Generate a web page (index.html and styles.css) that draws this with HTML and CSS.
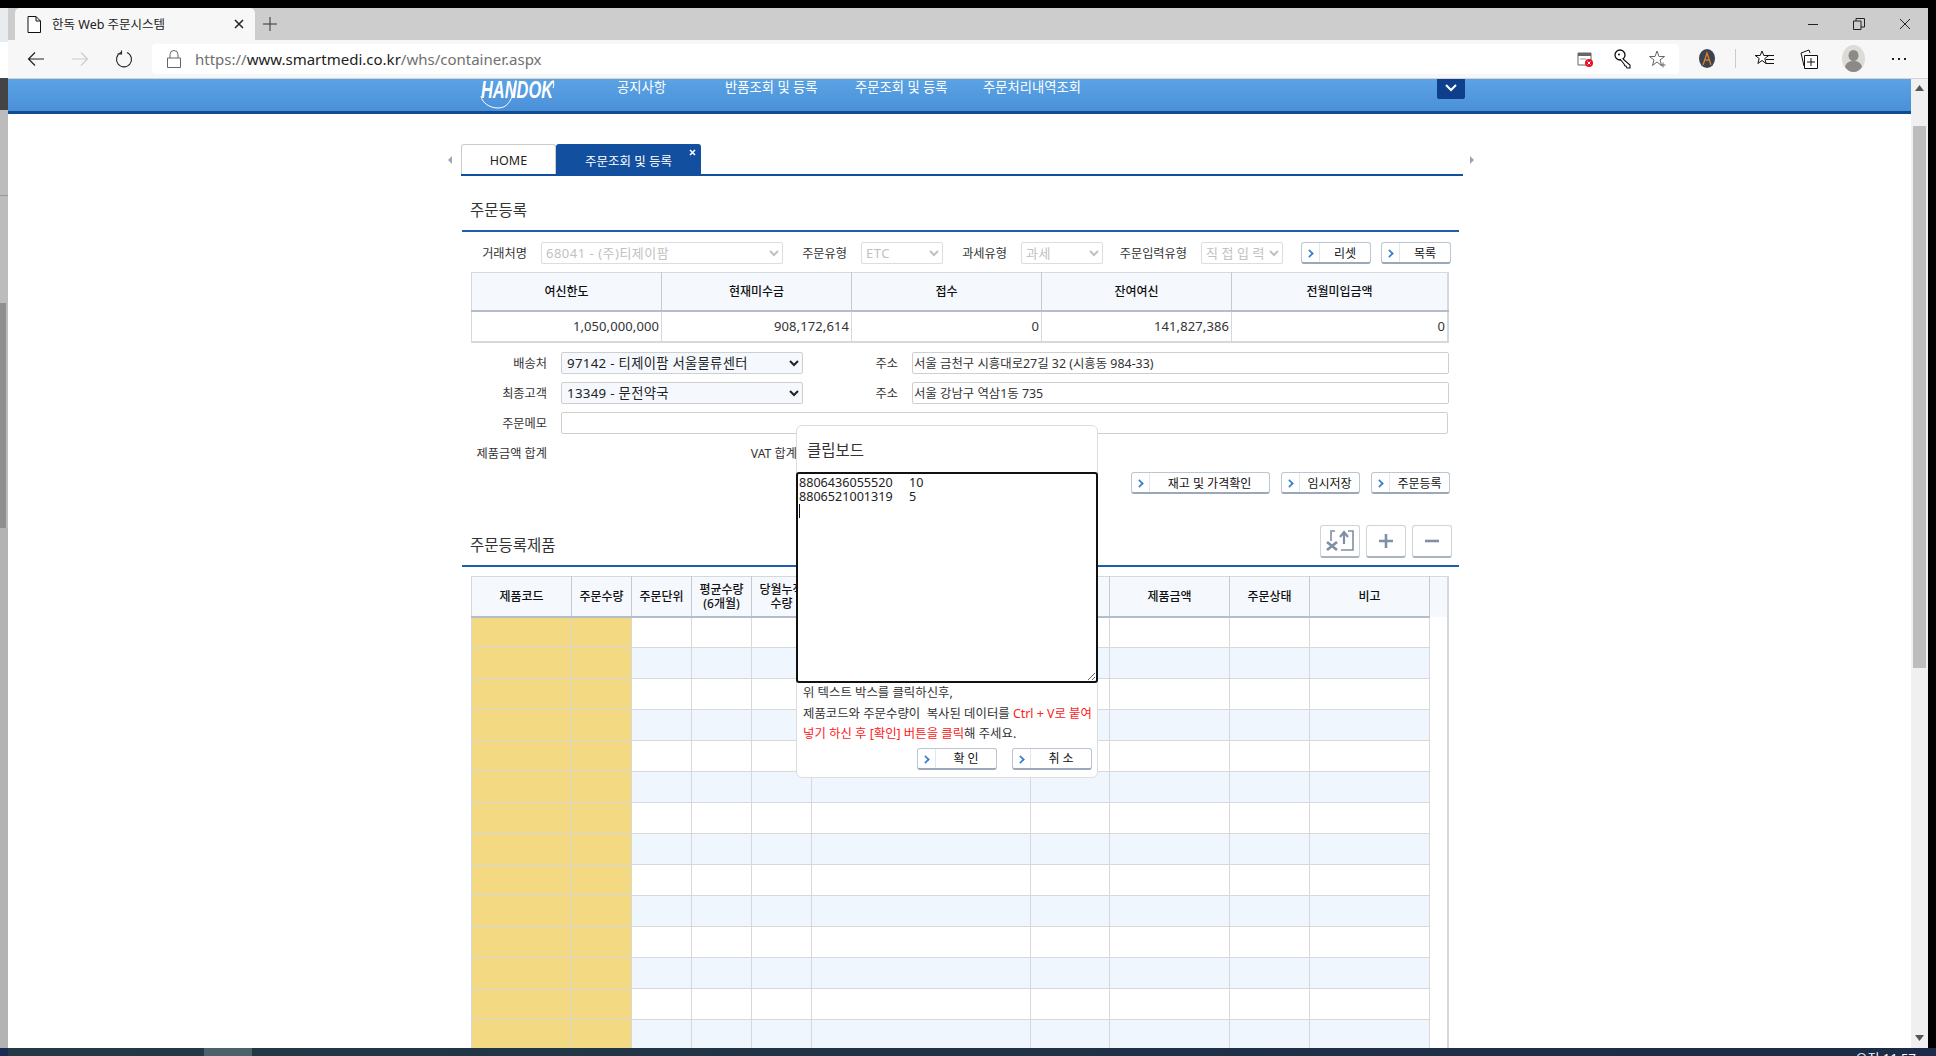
FILE: index.html
```html
<!DOCTYPE html>
<html lang="ko">

<head>
  <meta charset="UTF-8">
  <title>한독 Web 주문시스템</title>
  <link rel="stylesheet" href="styles.css">
</head>

<body>
  <div class="top-edge"></div>

  <div class="desktop">
    <div class="back-window">
      <div class="back-light"></div>
      <div class="back-white"></div>
      <div class="back-dark"></div>
      <div class="back-gray">
        <div class="back-thumb"></div>
      </div>
    </div>

    <div class="browser">
      <div class="tabstrip">
        <div class="browser-tab">
          <svg class="tab-doc" width="14" height="17" viewBox="0 0 14 17">
            <path d="M1 .5h8l4.500 4.500v11.500h-12.500zM9 .5v4.500h4.500" fill="#fff" stroke="#111" />
          </svg>
          <span class="tab-title">한독 Web 주문시스템</span>
          <svg class="tab-close" width="10" height="10" viewBox="0 0 10 10">
            <path d="M1 1l8 8M9 1l-8 8" stroke="#222" stroke-width="1.500" />
          </svg>
        </div>
        <svg class="tab-new" width="14" height="14" viewBox="0 0 14 14">
          <path d="M7 0v14M0 7h14" stroke="#333" />
        </svg>
        <div class="win-controls">
          <svg width="12" height="12" viewBox="0 0 12 12"><path d="M1 6.500h10" stroke="#222" /></svg>
          <svg width="12" height="12" viewBox="0 0 12 12"><path d="M.5 3h7.500v8.500h-7.500zM3 3v-2.500h8.500v8.500h-3.500" fill="none" stroke="#222" /></svg>
          <svg width="12" height="12" viewBox="0 0 12 12"><path d="M1 1l10 10M11 1l-10 10" stroke="#222" /></svg>
        </div>
      </div>

      <div class="toolbar">
        <svg class="nav-back" width="18" height="16" viewBox="0 0 18 16"><path d="M17 8h-15M8 1.500l-6.500 6.500 6.500 6.500" fill="none" stroke="#222" stroke-width="1.200" /></svg>
        <svg class="nav-forward" width="18" height="16" viewBox="0 0 18 16"><path d="M1 8h15M10 1.500l6.500 6.500-6.500 6.500" fill="none" stroke="#ccc" stroke-width="1.200" /></svg>
        <svg class="nav-reload" width="18" height="18" viewBox="0 0 18 18"><path d="M12 2.500a7.500 7.500 0 1 1-6 0M6.500 .5v3.500h-4" fill="none" stroke="#222" stroke-width="1.100" /></svg>
        <div class="address">
          <svg class="lock" width="14" height="18" viewBox="0 0 14 18"><path d="M.5 8h13v9.500h-13zM3 8v-3.500a4 4 0 0 1 8 0v3.500" fill="none" stroke="#666" /></svg>
          <span class="url">https://<b>www.smartmedi.co.kr</b>/whs/container.aspx</span>
          <svg class="addr-popup" width="16" height="16" viewBox="0 0 16 16">
            <path d="M1 2h13v12h-13z" fill="#fff" stroke="#666" />
            <path d="M1 2h13v3h-13z" fill="#666" />
            <path d="M3 8h6" stroke="#999" />
            <circle cx="12" cy="12" r="4" fill="#e81123" />
            <path d="M10.500 10.500l3 3M13.500 10.500l-3 3" stroke="#fff" />
          </svg>
          <svg class="addr-key" width="18" height="20" viewBox="0 0 18 20">
            <circle cx="6" cy="6" r="5" fill="#fff" stroke="#111" stroke-width="1.300" />
            <circle cx="5" cy="5.500" r="1" fill="#111" />
            <path d="M9 10l7 6v3h-3l-1-2-1 0-1-2-4-5" fill="#fff" stroke="#111" stroke-width="1.100" />
          </svg>
          <svg class="addr-star" width="18" height="18" viewBox="0 0 18 18">
            <path d="M8 1l2 5.500h5.500l-4.500 3.500 1.500 5.500-4.500-3.500-4.500 3.500 1.500-5.500-4.500-3.500h5.500z" fill="none" stroke="#666" />
            <path d="M14 12.500v5M11.500 15h5" stroke="#666" />
          </svg>
        </div>
        <div class="ext-avatar">
          <svg width="16" height="19" viewBox="0 0 16 19">
            <ellipse cx="8" cy="9.500" rx="8" ry="9.500" fill="#3d4250" />
            <path d="M4 16l4-12 4 12M6 11h4" fill="none" stroke="#d9812a" stroke-width="1.300" />
          </svg>
        </div>
        <div class="tool-sep"></div>
        <svg class="tool-fav" width="20" height="18" viewBox="0 0 20 18">
          <path d="M7 1l1.800 4.500h5l-4 3 1.300 5-4.100-3-4.100 3 1.300-5-4-3h5z" fill="#fff" stroke="#111" />
          <path d="M11 5.500h8M11 9.500h8M11 13.500h8" stroke="#111" />
        </svg>
        <svg class="tool-coll" width="18" height="20" viewBox="0 0 18 20">
          <path d="M1 4l8-3 1 3" fill="#fff" stroke="#111" />
          <path d="M1 4l3 13" stroke="#111" />
          <path d="M4.500 6.500h13v13h-13z" fill="#fff" stroke="#111" />
          <path d="M11 9v8M7 13h8" stroke="#111" />
        </svg>
        <svg class="tool-profile" width="23" height="27" viewBox="0 0 23 27">
          <ellipse cx="11.500" cy="13.500" rx="11.500" ry="13.500" fill="#dcdbd8" />
          <ellipse cx="11.500" cy="10.500" rx="5" ry="5.500" fill="#8c8a86" />
          <path d="M3 22c1-5 5-6 8.500-6s7.500 1 8.500 6c-2 3-5 5-8.500 5s-6.500-2-8.500-5z" fill="#8c8a86" />
        </svg>
        <svg class="tool-more" width="16" height="4" viewBox="0 0 16 4">
          <path d="M1 1h2v2h-2zM7 1h2v2h-2zM13 1h2v2h-2z" fill="#222" />
        </svg>
      </div>

      <div class="viewport">
        <div class="page">
          <div class="gnb">
            <div class="logo">
              <svg width="76" height="31" viewBox="0 0 76 31">
                <text x="1" y="18.500" class="logo-text" textLength="72" lengthAdjust="spacingAndGlyphs">HANDOK</text>
                <path d="M1 17c1 7 9 12 17 12 9 0 13-7 15-15l3-13M73 1c1 3 1 5 0 8" fill="none" stroke="#fff" />
              </svg>
            </div>
            <a class="gnb-item gnb-notice">공지사항</a>
            <a class="gnb-item gnb-return">반품조회 및 등록</a>
            <a class="gnb-item gnb-order">주문조회 및 등록</a>
            <a class="gnb-item gnb-history">주문처리내역조회</a>
            <div class="gnb-toggle">
              <svg width="12" height="8" viewBox="0 0 12 8"><path d="M1 1l5 5 5-5" fill="none" stroke="#fff" stroke-width="2" /></svg>
            </div>
          </div>

          <div class="tab-row">
            <span class="tab-arrow left"></span>
            <div class="tab-track">
              <div class="page-tab">HOME</div>
              <div class="page-tab on">주문조회 및 등록
                <svg class="page-tab-x" width="7" height="7" viewBox="0 0 7 7"><path d="M1 1l5 5M6 1l-5 5" stroke="#fff" stroke-width="1.600" /></svg>
              </div>
            </div>
            <span class="tab-arrow right"></span>
          </div>

          <div class="section">
            <div class="sec-head">
              <h2 class="sec-title">주문등록</h2>
            </div>

            <div class="form-row first">
              <label class="lbl w65">거래처명</label>
              <select class="sel w242" disabled><option>68041 - (주)티제이팜</option></select>
              <label class="lbl w64">주문유형</label>
              <select class="sel w82" disabled><option>ETC</option></select>
              <label class="lbl w64">과세유형</label>
              <select class="sel w82" disabled><option>과세</option></select>
              <label class="lbl w84">주문입력유형</label>
              <select class="sel wide w82" disabled><option>직접입력</option></select>
              <button class="btn w70 push-18"><i class="btn-ico"></i><span>리셋</span></button>
              <button class="btn w70 push-10"><i class="btn-ico"></i><span>목록</span></button>
            </div>

            <table class="summary">
              <colgroup>
                <col class="c190"><col class="c190"><col class="c190"><col class="c190"><col>
              </colgroup>
              <tr>
                <th>여신한도</th>
                <th>현재미수금</th>
                <th>접수</th>
                <th>잔여여신</th>
                <th>전월미입금액</th>
              </tr>
              <tr>
                <td>1,050,000,000</td>
                <td>908,172,614</td>
                <td>0</td>
                <td>141,827,386</td>
                <td>0</td>
              </tr>
            </table>

            <div class="form-row">
              <label class="lbl w85">배송처</label>
              <select class="sel active w242"><option>97142 - 티제이팜 서울물류센터</option></select>
              <label class="lbl w95">주소</label>
              <input class="txt w537" type="text" value="서울 금천구 시흥대로27길 32 (시흥동 984-33)">
            </div>
            <div class="form-row">
              <label class="lbl w85">최종고객</label>
              <select class="sel active w242"><option>13349 - 문전약국</option></select>
              <label class="lbl w95">주소</label>
              <input class="txt w537" type="text" value="서울 강남구 역삼1동 735">
            </div>
            <div class="form-row">
              <label class="lbl w85">주문메모</label>
              <input class="txt w887" type="text">
            </div>
            <div class="form-row">
              <label class="lbl w85">제품금액 합계</label>
              <label class="lbl w236 flat">VAT 합계</label>
            </div>
            <div class="form-row actions">
              <button class="btn w139"><i class="btn-ico"></i><span>재고 및 가격확인</span></button>
              <button class="btn w79"><i class="btn-ico"></i><span>임시저장</span></button>
              <button class="btn w79"><i class="btn-ico"></i><span>주문등록</span></button>
            </div>
          </div>

          <div class="section second">
            <div class="sec-head">
              <h2 class="sec-title">주문등록제품</h2>
              <div class="sec-tools">
                <button class="tool-btn">
                  <svg width="38" height="30" viewBox="0 0 38 30">
                    <path d="M10 15v-10h4M27 5h5v19h-12" fill="none" stroke="#7f8fa6" stroke-width="1.600" />
                    <path d="M23 18v-11M19 11l4-5 4 5" fill="none" stroke="#7f8fa6" stroke-width="2.200" />
                    <path d="M6 16l10 8M16 16l-10 8" stroke="#7f8fa6" stroke-width="2.800" />
                  </svg>
                </button>
                <button class="tool-btn">
                  <svg width="14" height="14" viewBox="0 0 14 14"><path d="M7 0v14M0 7h14" stroke="#7f8fa6" stroke-width="2.600" /></svg>
                </button>
                <button class="tool-btn">
                  <svg width="14" height="14" viewBox="0 0 14 14"><path d="M0 7h14" stroke="#7f8fa6" stroke-width="2.600" /></svg>
                </button>
              </div>
            </div>

            <table class="items">
              <colgroup>
                <col class="i100"><col class="i60"><col class="i60"><col class="i60"><col class="i60">
                <col class="i219"><col class="i79"><col class="i120"><col class="i80"><col class="i120"><col>
              </colgroup>
              <thead>
                <tr>
                  <th>제품코드</th>
                  <th>주문수량</th>
                  <th>주문단위</th>
                  <th>평균수량<br>(6개월)</th>
                  <th>당월누적<br>수량</th>
                  <th>제품명</th>
                  <th>단가</th>
                  <th>제품금액</th>
                  <th>주문상태</th>
                  <th>비고</th>
                  <th class="gutter"></th>
                </tr>
              </thead>
              <tbody>
                <tr><td class="key"></td><td class="key"></td><td></td><td></td><td></td><td></td><td></td><td></td><td></td><td></td><td class="gutter"></td></tr>
                <tr><td class="key"></td><td class="key"></td><td></td><td></td><td></td><td></td><td></td><td></td><td></td><td></td><td class="gutter"></td></tr>
                <tr><td class="key"></td><td class="key"></td><td></td><td></td><td></td><td></td><td></td><td></td><td></td><td></td><td class="gutter"></td></tr>
                <tr><td class="key"></td><td class="key"></td><td></td><td></td><td></td><td></td><td></td><td></td><td></td><td></td><td class="gutter"></td></tr>
                <tr><td class="key"></td><td class="key"></td><td></td><td></td><td></td><td></td><td></td><td></td><td></td><td></td><td class="gutter"></td></tr>
                <tr><td class="key"></td><td class="key"></td><td></td><td></td><td></td><td></td><td></td><td></td><td></td><td></td><td class="gutter"></td></tr>
                <tr><td class="key"></td><td class="key"></td><td></td><td></td><td></td><td></td><td></td><td></td><td></td><td></td><td class="gutter"></td></tr>
                <tr><td class="key"></td><td class="key"></td><td></td><td></td><td></td><td></td><td></td><td></td><td></td><td></td><td class="gutter"></td></tr>
                <tr><td class="key"></td><td class="key"></td><td></td><td></td><td></td><td></td><td></td><td></td><td></td><td></td><td class="gutter"></td></tr>
                <tr><td class="key"></td><td class="key"></td><td></td><td></td><td></td><td></td><td></td><td></td><td></td><td></td><td class="gutter"></td></tr>
                <tr><td class="key"></td><td class="key"></td><td></td><td></td><td></td><td></td><td></td><td></td><td></td><td></td><td class="gutter"></td></tr>
                <tr><td class="key"></td><td class="key"></td><td></td><td></td><td></td><td></td><td></td><td></td><td></td><td></td><td class="gutter"></td></tr>
                <tr><td class="key"></td><td class="key"></td><td></td><td></td><td></td><td></td><td></td><td></td><td></td><td></td><td class="gutter"></td></tr>
                <tr><td class="key"></td><td class="key"></td><td></td><td></td><td></td><td></td><td></td><td></td><td></td><td></td><td class="gutter"></td></tr>
              </tbody>
            </table>
          </div>

          <!-- 클립보드 붙여넣기 팝업 -->
          <div class="clipboard">
            <div class="clip-title">클립보드</div>
            <div class="clip-box">
              <textarea class="clip-text" spellcheck="false">8806436055520     10
8806521001319     5
</textarea>
              <span class="clip-caret"></span>
            </div>
            <div class="clip-note">
              <p>위 텍스트 박스를 클릭하신후,</p>
              <p>제품코드와 주문수량이 &nbsp;복사된 데이터를 <em>Ctrl + V로 붙여</em></p>
              <p><em>넣기 하신 후 [확인] 버튼을 클릭</em>해 주세요.</p>
            </div>
            <div class="clip-btns">
              <button class="btn w80"><i class="btn-ico"></i><span>확 인</span></button>
              <button class="btn w80"><i class="btn-ico"></i><span>취 소</span></button>
            </div>
          </div>
        </div>

        <div class="scrollbar">
          <svg class="sb-up" width="9" height="6" viewBox="0 0 9 6"><path d="M4.500 0l4.500 6h-9z" fill="#555" /></svg>
          <div class="sb-thumb"></div>
          <svg class="sb-down" width="9" height="6" viewBox="0 0 9 6"><path d="M0 0h9l-4.500 6z" fill="#555" /></svg>
        </div>
      </div>
    </div>

    <div class="right-edge"></div>
  </div>

  <div class="taskbar">
    <div class="task-start"></div>
    <div class="task-active"></div>
    <div class="task-clock">오전 11:57</div>
  </div>
</body>

</html>
```

FILE: styles.css
```css
* {
  box-sizing: border-box;
}

html,
body {
  margin: 0;
  height: 100%;
  overflow: hidden;
}

body {
  background: #000;
  font-family: "Noto Sans", "Noto Sans CJK KR", sans-serif;
  font-size: 12px;
  color: #222;
}

.top-edge {
  height: 8px;
  background: #000;
}

.desktop {
  display: flex;
  height: 1040px;
}

.right-edge {
  width: 8px;
  background: #000;
}

/* window behind the browser */
.back-window {
  width: 8px;
  display: flex;
  flex-direction: column;
}

.back-light {
  height: 34px;
  background: #e8ecef;
}

.back-white {
  height: 36px;
  background: #fff;
}

.back-dark {
  height: 32px;
  background: #444;
}

.back-gray {
  flex: 1;
  padding-top: 193px;
  background: linear-gradient(#bcbcbc 85px, #999 85px, #999 86px, #bcbcbc 86px, #bcbcbc 418px, #b3b3b3 418px);
}

.back-thumb {
  width: 6px;
  height: 225px;
  background: #8f8f8f;
}

/* browser frame */
.browser {
  flex: 1;
  min-width: 0;
  display: flex;
  flex-direction: column;
}

.tabstrip {
  height: 32px;
  display: flex;
  align-items: center;
  background: #cdcdcd;
  padding-left: 7px;
}

.browser-tab {
  width: 240px;
  height: 32px;
  display: flex;
  align-items: center;
  background: #f7f7f7;
  border-radius: 5px 5px 0 0;
  padding: 0 11px 0 12px;
}

.tab-title {
  margin-left: 11px;
  margin-bottom: 1px;
  font-size: 12.500px;
  color: #222;
}

.tab-close {
  margin-left: auto;
}

.tab-new {
  margin-left: 8px;
}

.win-controls {
  margin-left: auto;
  margin-right: 17px;
  display: flex;
  gap: 34px;
}

.toolbar {
  height: 39px;
  display: flex;
  align-items: center;
  background: #f7f7f7;
  border-bottom: 1px solid #d4d4d4;
  padding-bottom: 1px;
}

.nav-back {
  margin-left: 19px;
}

.nav-forward {
  margin-left: 26px;
  margin-right: 26px;
}

.address {
  width: 1527px;
  height: 30px;
  margin-left: 19px;
  display: flex;
  align-items: center;
  background: #fff;
  border-radius: 4px;
}

.lock {
  margin-left: 15px;
}

.url {
  margin-left: 14px;
  font-size: 15px;
  color: #707070;
}

.url b {
  font-weight: normal;
  color: #222;
}

.addr-popup {
  margin-left: auto;
}

.addr-key {
  margin-left: 21px;
}

.addr-star {
  margin-left: 17px;
  margin-right: 12px;
}

.ext-avatar {
  margin-left: 20px;
  display: flex;
}

.tool-sep {
  width: 1px;
  height: 19px;
  margin-left: 20px;
  background: #ccc;
}

.tool-fav {
  margin-left: 19px;
}

.tool-coll {
  margin-left: 25px;
}

.tool-profile {
  margin-left: 24px;
}

.tool-more {
  margin-left: 26px;
}

.viewport {
  flex: 1;
  min-height: 0;
  display: flex;
}

.page {
  position: relative;
  flex: 1;
  min-width: 0;
  overflow: hidden;
  background: #fff;
}

.scrollbar {
  width: 17px;
  display: flex;
  flex-direction: column;
  align-items: center;
  background: #f0f0f0;
}

.sb-up {
  margin-top: 6px;
}

.sb-thumb {
  width: 13px;
  height: 542px;
  margin-top: 35px;
  background: #bdbdbd;
}

.sb-down {
  margin-top: auto;
  margin-bottom: 7px;
}

/* site header */
.gnb {
  height: 35px;
  display: flex;
  align-items: flex-start;
  background: linear-gradient(#5aa3e4, #4a90d9);
  border-bottom: 3px solid #134a94;
  color: #fff;
}

.logo {
  width: 137px;
  height: 32px;
  margin-left: 472px;
  overflow: hidden;
}

.logo-text {
  font-family: "Liberation Sans", sans-serif;
  font-size: 24px;
  font-style: italic;
  font-weight: bold;
  fill: #fff;
}

.gnb-item {
  font-size: 13.300px;
  line-height: 17px;
  color: #fff;
}

.gnb-notice {
  width: 108px;
}

.gnb-return {
  width: 130px;
}

.gnb-order {
  width: 128px;
}

.gnb-history {
  width: 100px;
}

.gnb-toggle {
  width: 28px;
  height: 20px;
  margin-left: auto;
  margin-right: 446px;
  display: flex;
  justify-content: center;
  padding-top: 5px;
  background: #0f3f8c;
  border-radius: 0 0 2px 2px;
}

/* page tabs */
.tab-row {
  width: 1030px;
  height: 32px;
  margin-top: 30px;
  margin-left: 439px;
  display: flex;
  align-items: flex-start;
}

.tab-arrow {
  width: 14px;
  margin-top: 12px;
  border-style: solid;
  border-color: transparent;
  border-width: 4px 0;
  height: 0;
}

.tab-arrow.left::before,
.tab-arrow.right::before {
  content: "";
  display: block;
  width: 0;
  height: 0;
  border-style: solid;
  border-color: transparent;
  border-width: 4px;
  margin-top: -4px;
}

.tab-arrow.left::before {
  border-right-color: #9aa6b5;
  margin-left: -3px;
}

.tab-arrow.right::before {
  border-left-color: #9aa6b5;
  margin-left: 7px;
}

.tab-track {
  flex: 1;
  height: 32px;
  display: flex;
  border-bottom: 2px solid #134f9f;
}

.page-tab {
  position: relative;
  width: 95px;
  height: 30px;
  display: flex;
  align-items: center;
  justify-content: center;
  padding-top: 2px;
  background: #fff;
  border: 1px solid #ccc;
  border-bottom: 0;
  border-radius: 3px 3px 0 0;
  font-size: 12.500px;
}

.page-tab.on {
  width: 145px;
  background: #134f9f;
  border-color: #134f9f;
  color: #fff;
}

.page-tab-x {
  position: absolute;
  top: 4px;
  right: 4px;
}

/* sections */
.section {
  width: 997px;
  margin-left: 454px;
}

.section.second {
  margin-top: 17px;
}

.sec-head {
  height: 56px;
  display: flex;
  justify-content: space-between;
  border-bottom: 2px solid #1a5fb0;
}

.sec-title {
  margin: 24px 0 0 8px;
  font-size: 15.500px;
  font-weight: normal;
  line-height: 20px;
  color: #333;
}

.sec-tools {
  display: flex;
  gap: 6px;
  margin: 14px 7px 0 0;
}

.tool-btn {
  width: 40px;
  height: 33px;
  display: flex;
  align-items: center;
  justify-content: center;
  padding: 0;
  background: #fff;
  border: 1px solid #cfd4da;
  border-bottom: 2px solid #a9b2bf;
  border-radius: 3px;
}

/* form rows */
.form-row {
  height: 22px;
  margin-top: 8px;
  display: flex;
  align-items: center;
}

.form-row.first {
  margin-top: 10px;
}

.form-row.actions {
  justify-content: flex-end;
  gap: 11px;
  padding-right: 9px;
}

.lbl {
  flex: none;
  margin-right: 14px;
  text-align: right;
  font-size: 12.200px;
  color: #333;
}

.lbl.flat {
  margin-right: 0;
}

.w64 { width: 64px; }
.w65 { width: 65px; }
.w70 { width: 70px; }
.w79 { width: 79px; }
.w80 { width: 80px; }
.w82 { width: 82px; }
.w84 { width: 84px; }
.w85 { width: 85px; }
.w95 { width: 95px; }
.w139 { width: 139px; }
.w236 { width: 236px; }
.w242 { width: 242px; }
.w537 { width: 537px; }
.w887 { width: 887px; }

.sel {
  flex: none;
  height: 22px;
  padding: 0;
  background: #fff;
  border: 1px solid #cfcfcf;
  border-radius: 2px;
  font-family: inherit;
  font-size: 13px;
  color: #a8a8a8;
  letter-spacing: .5px;
}

.sel.wide {
  letter-spacing: 3.500px;
}

.sel.active {
  padding-left: 1px;
  background: #f5f9fe;
  color: #222;
  font-size: 13.300px;
  letter-spacing: .3px;
}

.txt {
  flex: none;
  height: 22px;
  padding: 0 1px;
  background: #fff;
  border: 1px solid #cfcfcf;
  border-radius: 2px;
  font-family: inherit;
  font-size: 12.400px;
  color: #333;
}

.btn {
  flex: none;
  height: 22px;
  display: flex;
  align-items: center;
  padding: 0;
  background: #fff;
  border: 1px solid #bcc6d2;
  border-bottom: 2px solid #9aa8ba;
  border-radius: 3px;
  font-family: inherit;
  font-size: 12px;
  color: #111;
}

.btn span {
  flex: 1;
  text-align: center;
}

.btn-ico {
  width: 18px;
  height: 100%;
  flex: none;
  position: relative;
  border-right: 1px solid #e3e7ec;
}

.btn-ico::before {
  content: "";
  position: absolute;
  left: 4px;
  top: 7px;
  width: 5px;
  height: 5px;
  border-top: 2px solid #3d7fd0;
  border-right: 2px solid #3d7fd0;
  transform: rotate(45deg) scale(.85);
}

.push-18 {
  margin-left: 18px;
}

.push-10 {
  margin-left: 10px;
}

/* credit summary */
.summary {
  width: 978px;
  height: 71px;
  margin-top: 8px;
  margin-bottom: 9px;
  margin-left: 9px;
  table-layout: fixed;
  border-collapse: collapse;
  border-top: 1px solid #d5d8dc;
  border-left: 1px solid #d5d8dc;
  border-right: 2px solid #d5d8dc;
  border-bottom: 2px solid #d5d8dc;
}

.c190 {
  width: 190px;
}

.summary th {
  height: 38px;
  padding-bottom: 2px;
  background: #f5f9fe;
  border-right: 1px solid #c6cbd2;
  border-bottom: 2px solid #b5bdca;
  font-weight: 500;
  color: #111;
}

.summary td {
  padding-right: 2px;
  text-align: right;
  border-right: 1px solid #d5d8dc;
  font-size: 13px;
  letter-spacing: .1px;
  color: #333;
}

.summary + .form-row {
  margin-top: 0;
}

/* product grid */
.items {
  width: 978px;
  margin-top: 9px;
  margin-left: 9px;
  table-layout: fixed;
  border-collapse: collapse;
  border-top: 1px solid #d5d8dc;
  border-left: 1px solid #d5d8dc;
  border-right: 2px solid #d5d8dc;
}

.i60 { width: 60px; }
.i79 { width: 79px; }
.i80 { width: 80px; }
.i100 { width: 100px; }
.i120 { width: 120px; }
.i219 { width: 219px; }

.items th {
  height: 40px;
  padding: 1px 0 0;
  background: #f5f9fe;
  border-right: 1px solid #c6cbd2;
  border-bottom: 2px solid #b5bdca;
  font-weight: 500;
  font-size: 12px;
  line-height: 14px;
  color: #111;
}

.items td {
  height: 31px;
  padding: 0;
  border-right: 1px solid #d8d8d8;
  border-bottom: 1px solid #d8d8d8;
}

.items tbody tr:nth-child(even) td {
  background: #eff6fd;
}

.items tbody td.key,
.items tbody tr:nth-child(even) td.key {
  background: #f3d982;
}

.items th.gutter {
  border-right: 0;
  border-bottom: 0;
}

.items tbody td.gutter,
.items tbody tr:nth-child(even) td.gutter {
  background: #fff;
  border-right: 0;
  border-bottom: 0;
}

/* clipboard popup */
.clipboard {
  position: absolute;
  left: 788px;
  top: 346px;
  width: 302px;
  height: 353px;
  background: #fff;
  border: 1px solid #ddd;
  border-radius: 6px;
}

.clip-title {
  height: 46px;
  padding: 14px 0 0 10px;
  font-size: 15.500px;
  line-height: 20px;
  color: #333;
}

.clip-box {
  position: relative;
  height: 211px;
  margin: 0 -1px;
}

.clip-text {
  display: block;
  width: 100%;
  height: 100%;
  padding: 2px 0 0 1px;
  border: 2px solid #111;
  border-radius: 3px;
  outline: 0;
  font-family: inherit;
  font-size: 12.600px;
  line-height: 14px;
  color: #222;
}

.clip-caret {
  position: absolute;
  left: 3px;
  top: 32px;
  width: 1px;
  height: 14px;
  background: #111;
}

.clip-note {
  padding: 0 0 0 6px;
  font-size: 12.400px;
  line-height: 20.500px;
  color: #333;
}

.clip-note p {
  margin: 0;
}

.clip-note em {
  font-style: normal;
  color: #ff2020;
}

.clip-btns {
  display: flex;
  justify-content: flex-end;
  gap: 15px;
  margin-top: 3px;
  padding-right: 5px;
}

/* windows taskbar */
.taskbar {
  height: 8px;
  display: flex;
  overflow: hidden;
  background: linear-gradient(90deg, #233a45, #1c2b47);
}

.task-start {
  width: 8px;
  background: #1a2a55;
}

.task-active {
  width: 48px;
  margin-left: 196px;
  background: #4d6168;
}

.task-clock {
  margin-left: auto;
  margin-right: 20px;
  padding-top: 2px;
  font-size: 13px;
  line-height: 16px;
  color: #fff;
}
```
